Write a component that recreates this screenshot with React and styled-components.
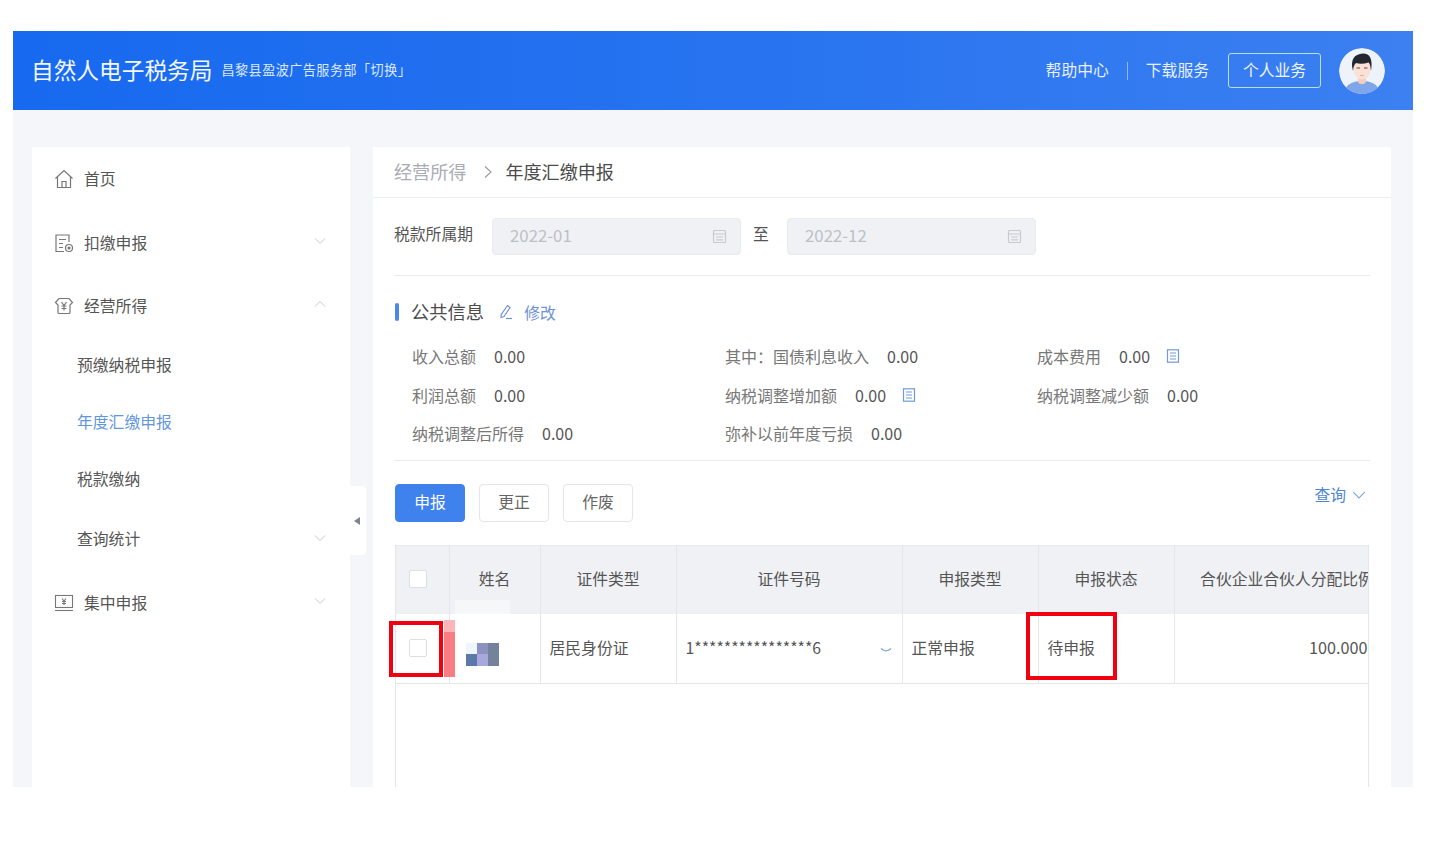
import styled, { createGlobalStyle } from 'styled-components'

const GlobalStyle = createGlobalStyle`
  html, body {
    margin: 0;
    padding: 0;
    background: #fff;
  }
  body {
    font-family: "Noto Sans CJK SC", "Liberation Sans", sans-serif;
    color: #555;
  }
  * {
    box-sizing: border-box;
  }
`

const Chevron = ({ up, size = 14, color = '#c3c7cf' }) => (
  <svg width={size} height={size} viewBox="0 0 14 14" fill="none" stroke={color} strokeWidth="1">
    <path d={up ? 'M2 9.5L7 4.5L12 9.5' : 'M2 4.5L7 9.5L12 4.5'} />
  </svg>
)

const CrumbArrow = () => (
  <svg width="10" height="14" viewBox="0 0 10 14" fill="none" stroke="#999" strokeWidth="1.1">
    <path d="M2 1.5L8 7L2 12.5" />
  </svg>
)

const HomeIcon = () => (
  <svg width="20" height="20" viewBox="0 0 20 20" fill="none" stroke="#777" strokeWidth="1.2">
    <path d="M1.5 9.5L10 1.5L18.5 9.5" />
    <path d="M3.5 8V18.5H16.5V8" />
    <path d="M8 18.5V12.5H12V18.5" />
  </svg>
)

const FormIcon = () => (
  <svg width="20" height="20" viewBox="0 0 20 20" fill="none" stroke="#777" strokeWidth="1.2">
    <path d="M15 9V2H2V18.5H10" />
    <path d="M5 6.5H12M5 10.5H9M5 14.5H9" />
    <circle cx="15" cy="15" r="3.5" />
    <circle cx="15" cy="15" r="1" fill="#777" />
  </svg>
)

const YenIcon = () => (
  <svg width="20" height="20" viewBox="0 0 20 20" fill="none" stroke="#777" strokeWidth="1.2">
    <path d="M1.5 6.5L5 2.5H15L18.5 6.5L16 9V16.5Q16 17.5 15 17.5H5Q4 17.5 4 16.5V9Z" />
    <path d="M7.5 6L10 9.5L12.5 6M10 9.5V14.5M7.5 10H12.5M7.5 12.5H12.5" />
  </svg>
)

const ScreenIcon = () => (
  <svg width="20" height="20" viewBox="0 0 20 20" fill="none" stroke="#777" strokeWidth="1.1">
    <rect x="1.5" y="2.5" width="17" height="12" />
    <path d="M1 17.5H19" />
    <path d="M8 5.5L10 8L12 5.5M10 8V12M8 8.5H12M8 10.5H12" />
  </svg>
)

const CalendarIcon = () => (
  <svg width="15" height="15" viewBox="0 0 15 15" fill="none" stroke="#c6cad1" strokeWidth="1.2">
    <rect x="1.5" y="1.5" width="12" height="12" rx="1" />
    <path d="M1.5 5H13.5M4 8H11M4 10.8H11" />
  </svg>
)

const DocIcon = () => (
  <svg width="14" height="14" viewBox="0 0 14 14" fill="none" stroke="#6f9bd8" strokeWidth="1.2">
    <rect x="1.5" y="0.8" width="11" height="12.4" />
    <path d="M4 4H10M4 7H10M4 10H10" />
  </svg>
)

const PenIcon = () => (
  <svg width="16" height="16" viewBox="0 0 16 16" fill="none" stroke="#6f92d6" strokeWidth="1.2">
    <path d="M9.5 1.5L12 3.5L6 12.5L3 13.5L3.3 10.5Z" />
    <path d="M8 14.5H14" />
  </svg>
)

const Avatar = () => (
  <svg width="46" height="46" viewBox="0 0 46 46">
    <circle cx="23" cy="23" r="23" fill="#eef2f9" />
    <path d="M6 41C10 34 17 33 23 33C29 33 36 34 40 41C36 44 30 46 23 46C16 46 10 44 6 41Z" fill="#7fa6ea" />
    <path d="M19 27H27V34C25 37 21 37 19 34Z" fill="#f4cdbd" />
    <ellipse cx="23" cy="21" rx="8.5" ry="10.5" fill="#fbe0d5" />
    <path d="M14 23C11 12 15 6 24 5.5C31 5.5 34 11 32 23C31.5 18 31 16 29.5 14.5C25 16 20 16 17 15C15 17 14.5 19 14 23Z" fill="#232730" />
    <path d="M17.5 20H21M25 20H28.5" stroke="#5a4a48" strokeWidth="1" />
    <path d="M21 27.5H25" stroke="#e2a79a" strokeWidth="0.9" />
  </svg>
)

const Frame = styled.div`
  position: relative;
  width: 1400px;
  height: 756px;
  margin: 31px 0 0 13px;
  background: #f4f6fa;
  overflow: hidden;
  display: flex;
  flex-direction: column;
`

const TopBar = styled.header`
  height: 79px;
  flex: none;
  display: flex;
  align-items: center;
  padding: 0 28px 0 18px;
  background: linear-gradient(90deg, #1769ef 0%, #2a75f0 60%, #3c80f1 100%);
  color: #fff;
`

const Title = styled.div`
  margin-top: -1px;
  font-size: 22.7px;
  line-height: 30px;
  color: #f2f7ff;
`

const Company = styled.div`
  margin-left: 9px;
  margin-top: -2px;
  font-size: 13.1px;
  letter-spacing: 0.035em;
  color: #dbe8ff;
  white-space: nowrap;
`

const TopLinks = styled.div`
  margin-left: auto;
  display: flex;
  align-items: center;
`

const TopLink = styled.a`
  margin-top: -3px;
  font-size: 15.8px;
  color: #e6f0ff;
`

const TopSep = styled.span`
  width: 1px;
  height: 18px;
  margin: 0 18px;
  background: #8fb6f6;
`

const PersonalButton = styled.div`
  width: 93px;
  height: 35px;
  margin: 0 18px 0 19px;
  padding-bottom: 2px;
  display: flex;
  align-items: center;
  justify-content: center;
  border: 1px solid #b5e0e8;
  border-radius: 3px;
  font-size: 15.8px;
  color: #f0f6ff;
`

const AvatarWrap = styled.div`
  width: 46px;
  height: 46px;
  border-radius: 50%;
  overflow: hidden;
`

const Body = styled.div`
  flex: 1;
  min-height: 0;
  display: flex;
  gap: 23px;
  padding: 37px 22px 0 19px;
`

const Sidebar = styled.aside`
  position: relative;
  width: 318px;
  flex: none;
  background: #fff;
`

const MenuItem = styled.div`
  height: ${(p) => p.$h}px;
  display: flex;
  align-items: center;
  padding: ${(p) => (p.$sub ? '0 23px 2px 45px' : '0 23px 2px 22px')};
  font-size: 15.8px;
  color: ${(p) => (p.$active ? '#5f96dc' : '#555')};
`

const MenuIcon = styled.span`
  width: 20px;
  height: 20px;
  margin: 2px 10px 0 0;
  display: flex;
`

const MenuArrow = styled.span`
  margin-left: auto;
  margin-top: -2px;
  display: flex;
`

const CollapseHandle = styled.div`
  position: absolute;
  left: 318px;
  top: 339px;
  width: 16px;
  height: 69px;
  display: flex;
  align-items: center;
  justify-content: center;
  background: #fff;
  border-radius: 0 4px 4px 0;
  &::before {
    content: '';
    margin-right: 2px;
    border-style: solid;
    border-width: 4.5px 6px 4.5px 0;
    border-color: transparent #7d8590 transparent transparent;
  }
`

const Main = styled.main`
  flex: 1;
  min-width: 0;
  background: #fff;
  display: flex;
  flex-direction: column;
`

const Breadcrumb = styled.div`
  height: 51px;
  flex: none;
  display: flex;
  align-items: center;
  padding: 0 21px 2px;
  border-bottom: 1px solid #eceef2;
  font-size: 18.1px;
`

const CrumbParent = styled.span`
  color: #a9adb4;
`

const CrumbSep = styled.span`
  margin: 2px 12px 0 17px;
  display: flex;
`

const CrumbCurrent = styled.span`
  color: #4b4b4b;
`

const Content = styled.div`
  flex: 1;
  min-height: 0;
  display: flex;
  flex-direction: column;
  padding: 0 21px;
`

const FilterRow = styled.div`
  height: 78px;
  flex: none;
  display: flex;
  align-items: center;
  border-bottom: 1px solid #e8eaee;
`

const FilterLabel = styled.span`
  width: 98px;
  margin-top: -6px;
  font-size: 15.8px;
  color: #555;
`

const DateInput = styled.div`
  width: 249px;
  height: 37px;
  display: flex;
  align-items: center;
  justify-content: space-between;
  padding: 0 13px 3px 17px;
  background: #f0f1f4;
  border: 1px solid #e8eaee;
  border-radius: 4px;
  font-size: 16.8px;
  color: #bcc0c6;
`

const DateIcon = styled.span`
  margin-top: 3px;
  display: flex;
`

const RangeSep = styled.span`
  width: 46px;
  margin-top: -7px;
  padding-left: 12px;
  font-size: 15.8px;
  color: #555;
`

const SectionHead = styled.div`
  height: 36px;
  margin-top: 18px;
  flex: none;
  display: flex;
  align-items: center;
  border-left: 4px solid transparent;
`

const SectionBar = styled.span`
  width: 4px;
  height: 18px;
  margin: 0 12px 0 -3px;
  background: #4a87e6;
  border-radius: 2px;
`

const SectionTitle = styled.span`
  margin-top: -2px;
  font-size: 18.3px;
  color: #4b4b4b;
`

const EditLink = styled.span`
  margin-left: 14px;
  display: flex;
  align-items: center;
  gap: 10px;
  font-size: 15.8px;
  color: #6f92d6;
`

const InfoGrid = styled.div`
  flex: none;
  margin-top: 7px;
  padding: 0 0 7px 18px;
  display: grid;
  grid-template-columns: 313px 312px 1fr;
  grid-auto-rows: 38.5px;
  align-items: center;
  border-bottom: 1px solid #e8eaee;
`

const InfoItem = styled.div`
  display: flex;
  align-items: center;
  font-size: 16px;
  color: #777;
`

const InfoValue = styled.span`
  margin-left: 18px;
  font-size: 16px;
  color: #555;
`

const InfoIcon = styled.span`
  margin-left: 16px;
  display: flex;
`

const ActionRow = styled.div`
  height: 84px;
  flex: none;
  display: flex;
  align-items: center;
  gap: 14px;
  padding: 0 3px 0 1px;
`

const Button = styled.button`
  width: 70px;
  height: 38px;
  padding: 0 0 2px;
  border-radius: 4px;
  border: 1px solid ${(p) => (p.$primary ? '#3f82ee' : '#e3e5ea')};
  background: ${(p) => (p.$primary ? '#3f82ee' : '#fff')};
  color: ${(p) => (p.$primary ? '#fff' : '#666')};
  font-family: inherit;
  font-size: 15.8px;
`

const QueryLink = styled.span`
  margin-left: auto;
  margin-top: -16px;
  display: flex;
  align-items: center;
  gap: 5px;
  font-size: 15.8px;
  color: #4f86cf;
`

const TableWrap = styled.div`
  flex: 1;
  min-height: 0;
  width: 974px;
  margin-left: 1px;
  overflow: hidden;
  border-left: 1px solid #e4e6ea;
  border-right: 1px solid #e4e6ea;
`

const Table = styled.table`
  width: 1004px;
  table-layout: fixed;
  border-collapse: collapse;
`

const Th = styled.th`
  height: 69px;
  padding: 0 0 2px;
  width: ${(p) => p.$w}px;
  background: #f0f1f4;
  border-right: 1px solid #e4e6ea;
  border-top: 1px solid #e8eaee;
  font-size: 15.8px;
  font-weight: 400;
  color: #555;
  white-space: nowrap;
  overflow: hidden;
`

const Td = styled.td`
  position: relative;
  height: 69px;
  padding: 0 8px 2px 9px;
  border-right: 1px solid #e4e6ea;
  border-bottom: 1px solid #e4e6ea;
  font-size: 15.8px;
  color: #555;
  text-align: ${(p) => p.$align || 'left'};
`

const CheckCell = styled(Td)`
  padding: 0;
`

const PercentCell = styled(Td)`
  padding-right: 32px;
  font-size: 16.2px;
`

const CheckBox = styled.span`
  display: block;
  width: 18px;
  height: 18px;
  margin-left: 13px;
  background: #fff;
  border: 1px solid #dcdfe4;
  border-radius: 2px;
`

const PinkBar = styled.span`
  position: absolute;
  left: -6px;
  top: 6px;
  width: 11px;
  height: 57px;
  background: linear-gradient(180deg, #fbb5b8 0, #fbb5b8 12px, #fb7d84 12px);
`

const HeaderSmear = styled.span`
  position: absolute;
  left: 5px;
  top: -14px;
  width: 55px;
  height: 14px;
  background: #f6f7f9;
`

const Mosaic = styled.div`
  margin: 14px 0 0 7px;
  width: 34px;
  height: 23px;
  display: grid;
  grid-template-columns: repeat(3, 1fr);
  grid-template-rows: repeat(2, 1fr);
`

const Tile = styled.span`
  background: ${(p) => p.$c};
  grid-row: ${(p) => p.$span || 'auto'};
`

const IdRow = styled.div`
  display: flex;
  align-items: center;
  justify-content: space-between;
  padding-right: 2px;
`

const IdDrop = styled.svg`
  margin-top: 5px;
`

const RedMark = styled.div`
  position: absolute;
  left: ${(p) => p.$x}px;
  top: ${(p) => p.$y}px;
  width: ${(p) => p.$w}px;
  height: ${(p) => p.$h}px;
  border: 4px solid #f1000f;
`

const columns = [
  { key: 'check', w: 53 },
  { key: 'name', w: 91, label: '姓名' },
  { key: 'idType', w: 136, label: '证件类型' },
  { key: 'idNo', w: 226, label: '证件号码' },
  { key: 'type', w: 136, label: '申报类型' },
  { key: 'status', w: 136, label: '申报状态' },
  { key: 'ratio', w: 226, label: '合伙企业合伙人分配比例' },
]

export default function App() {
  return (
    <>
      <GlobalStyle />
      <Frame>
        <TopBar>
          <Title>自然人电子税务局</Title>
          <Company>昌黎县盈波广告服务部「切换」</Company>
          <TopLinks>
            <TopLink>帮助中心</TopLink>
            <TopSep />
            <TopLink>下载服务</TopLink>
            <PersonalButton>个人业务</PersonalButton>
            <AvatarWrap><Avatar /></AvatarWrap>
          </TopLinks>
        </TopBar>
        <Body>
          <Sidebar>
            <MenuItem $h={64}>
              <MenuIcon><HomeIcon /></MenuIcon>首页
            </MenuItem>
            <MenuItem $h={64}>
              <MenuIcon><FormIcon /></MenuIcon>扣缴申报
              <MenuArrow><Chevron /></MenuArrow>
            </MenuItem>
            <MenuItem $h={62}>
              <MenuIcon><YenIcon /></MenuIcon>经营所得
              <MenuArrow><Chevron up /></MenuArrow>
            </MenuItem>
            <MenuItem $h={57} $sub>预缴纳税申报</MenuItem>
            <MenuItem $h={57} $sub $active>年度汇缴申报</MenuItem>
            <MenuItem $h={57} $sub>税款缴纳</MenuItem>
            <MenuItem $h={63} $sub>
              查询统计
              <MenuArrow><Chevron /></MenuArrow>
            </MenuItem>
            <MenuItem $h={64}>
              <MenuIcon><ScreenIcon /></MenuIcon>集中申报
              <MenuArrow><Chevron /></MenuArrow>
            </MenuItem>
            <CollapseHandle />
          </Sidebar>
          <Main>
            <Breadcrumb>
              <CrumbParent>经营所得</CrumbParent>
              <CrumbSep><CrumbArrow /></CrumbSep>
              <CrumbCurrent>年度汇缴申报</CrumbCurrent>
            </Breadcrumb>
            <Content>
              <FilterRow>
                <FilterLabel>税款所属期</FilterLabel>
                <DateInput>2022-01<DateIcon><CalendarIcon /></DateIcon></DateInput>
                <RangeSep>至</RangeSep>
                <DateInput>2022-12<DateIcon><CalendarIcon /></DateIcon></DateInput>
              </FilterRow>
              <SectionHead>
                <SectionBar />
                <SectionTitle>公共信息</SectionTitle>
                <EditLink><PenIcon />修改</EditLink>
              </SectionHead>
              <InfoGrid>
                <InfoItem>收入总额<InfoValue>0.00</InfoValue></InfoItem>
                <InfoItem>其中：国债利息收入<InfoValue>0.00</InfoValue></InfoItem>
                <InfoItem>成本费用<InfoValue>0.00</InfoValue><InfoIcon><DocIcon /></InfoIcon></InfoItem>
                <InfoItem>利润总额<InfoValue>0.00</InfoValue></InfoItem>
                <InfoItem>纳税调整增加额<InfoValue>0.00</InfoValue><InfoIcon><DocIcon /></InfoIcon></InfoItem>
                <InfoItem>纳税调整减少额<InfoValue>0.00</InfoValue></InfoItem>
                <InfoItem>纳税调整后所得<InfoValue>0.00</InfoValue></InfoItem>
                <InfoItem>弥补以前年度亏损<InfoValue>0.00</InfoValue></InfoItem>
              </InfoGrid>
              <ActionRow>
                <Button $primary>申报</Button>
                <Button>更正</Button>
                <Button>作废</Button>
                <QueryLink>查询<Chevron size={16} color="#7ea6d8" /></QueryLink>
              </ActionRow>
              <TableWrap>
                <Table>
                  <thead>
                    <tr>
                      {columns.map((c) => (
                        <Th key={c.key} $w={c.w}>
                          {c.key === 'check' ? <CheckBox /> : c.label}
                        </Th>
                      ))}
                    </tr>
                  </thead>
                  <tbody>
                    <tr>
                      <CheckCell><CheckBox /></CheckCell>
                      <Td>
                        <PinkBar />
                        <HeaderSmear />
                        <Mosaic>
                          <Tile $c="#eef6fb" />
                          <Tile $c="#8c92c0" />
                          <Tile $c="#74829c" $span="span 2" />
                          <Tile $c="#5c78a8" />
                          <Tile $c="#a8a8dc" />
                        </Mosaic>
                      </Td>
                      <Td>居民身份证</Td>
                      <Td>
                        <IdRow>
                          1****************6
                          <IdDrop width="12" height="6" viewBox="0 0 12 6" fill="none" stroke="#7ea6d8" strokeWidth="1.4">
                            <path d="M1 1.5C4 4.5 8 4.5 11 1.5" />
                          </IdDrop>
                        </IdRow>
                      </Td>
                      <Td>正常申报</Td>
                      <Td>待申报</Td>
                      <PercentCell $align="right">100.000</PercentCell>
                    </tr>
                  </tbody>
                </Table>
              </TableWrap>
            </Content>
          </Main>
        </Body>
        <RedMark $x={376} $y={590} $w={54} $h={56} />
        <RedMark $x={1013} $y={581} $w={91} $h={68} />
      </Frame>
    </>
  )
}
